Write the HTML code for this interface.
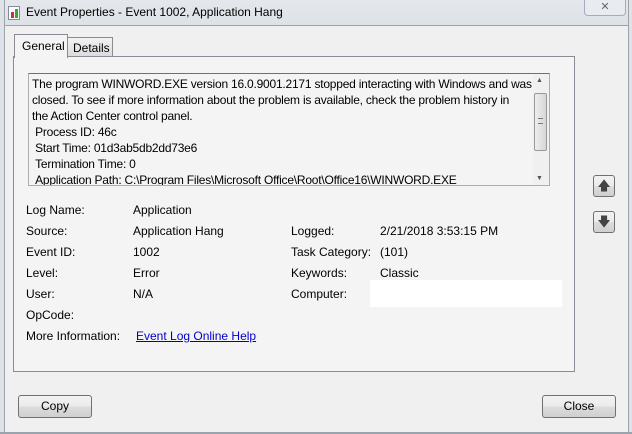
<!DOCTYPE html>
<html><head><style>
*{margin:0;padding:0;box-sizing:border-box}
body{width:632px;height:434px;background:#f0f0f0;font-family:"Liberation Sans",sans-serif;font-size:12px;color:#000;position:relative;overflow:hidden}
.a{position:absolute;white-space:nowrap}
.btn{position:absolute;border:1px solid #707070;border-radius:3px;background:linear-gradient(#f2f2f2,#ebebeb 50%,#dddddd 51%,#cfcfcf);text-align:center;line-height:21px}
</style></head><body>
<div class="a" style="left:0;top:0;width:632px;height:26px;background:linear-gradient(#e4e8ec,#dde2e7)"></div>
<div class="a" style="left:0;top:0;width:5px;height:434px;background:#dfe3e8;border-right:1px solid #9ba3ad"></div>
<div class="a" style="right:0;top:0;width:4px;height:434px;background:#dfe3e8;border-left:1px solid #9ba3ad"></div>
<div class="a" style="left:0;bottom:0;width:632px;height:2px;background:#9ba3ad"></div>
<div class="a" style="left:5px;top:25px;width:623px;height:1px;background:#9ba3ad"></div>
<div class="a" style="left:8px;top:6px;width:12px;height:14px;border:1px solid #889;background:#fff"><div style="position:absolute;left:2px;top:5px;width:3px;height:6px;background:#c33"></div><div style="position:absolute;left:6px;top:2px;width:3px;height:9px;background:#3a3"></div></div>
<div class="a" style="left:26px;top:5px;font-size:12px">Event Properties - Event 1002, Application Hang</div>
<div class="a" style="left:584px;top:0;width:42px;height:16px;border:1px solid #aab;border-top:none;border-radius:0 0 4px 4px;background:#e8ebef;text-align:center;font-size:11px;line-height:14px;color:#666">✕</div>
<div class="a" style="left:13px;top:56px;width:562px;height:316px;border:1px solid #898c95;background:#f4f4f4"></div>
<div class="a" style="left:14px;top:34px;width:54px;height:24px;border:1px solid #898c95;border-bottom:none;background:#f4f4f4;padding:4px 0 0 7px">General</div>
<div class="a" style="left:67px;top:37px;width:46px;height:20px;border:1px solid #898c95;background:linear-gradient(#f2f2f2,#dcdcdc);padding:3px 0 0 5px">Details</div>
<div class="a" style="left:28px;top:73px;width:522px;height:113px;border:1px solid #abadb3;border-top-color:#707070;background:#f4f4f4;overflow:hidden">
<div style="position:absolute;left:3px;top:2px;line-height:16px;white-space:nowrap;letter-spacing:-0.22px">The program WINWORD.EXE version 16.0.9001.2171 stopped interacting with Windows and was<br>closed. To see if more information about the problem is available, check the problem history in<br>the Action Center control panel.<br>&nbsp;Process ID: 46c<br>&nbsp;Start Time: 01d3ab5db2dd73e6<br>&nbsp;Termination Time: 0<br>&nbsp;Application Path: C:\Program Files\Microsoft Office\Root\Office16\WINWORD.EXE<br>&nbsp;Report Id: 00d5d200-173b-11e8-bb1d-3c6aa9e0c151</div>
<div style="position:absolute;right:0;top:0;width:16px;height:111px;background:#f0f0f0">
<div style="position:absolute;left:3px;top:3px;font-size:7px;color:#555">▲</div>
<div style="position:absolute;left:1px;top:19px;width:13px;height:58px;border:1px solid #999;border-radius:2px;background:linear-gradient(90deg,#eee,#d6d6d6)"><div style="position:absolute;left:3px;top:24px;width:5px;height:6px;border-top:1px solid #777;border-bottom:1px solid #777"></div></div>
<div style="position:absolute;left:3px;bottom:3px;font-size:7px;color:#555">▼</div>
</div></div>
<div class="a" style="left:26px;top:203px">Log Name:</div><div class="a" style="left:133px;top:203px">Application</div>
<div class="a" style="left:26px;top:224px">Source:</div><div class="a" style="left:133px;top:224px">Application Hang</div>
<div class="a" style="left:291px;top:224px">Logged:</div><div class="a" style="left:380px;top:224px">2/21/2018 3:53:15 PM</div>
<div class="a" style="left:26px;top:245px">Event ID:</div><div class="a" style="left:133px;top:245px">1002</div>
<div class="a" style="left:291px;top:245px">Task Category:</div><div class="a" style="left:380px;top:245px">(101)</div>
<div class="a" style="left:26px;top:266px">Level:</div><div class="a" style="left:133px;top:266px">Error</div>
<div class="a" style="left:291px;top:266px">Keywords:</div><div class="a" style="left:380px;top:266px">Classic</div>
<div class="a" style="left:26px;top:287px">User:</div><div class="a" style="left:133px;top:287px">N/A</div>
<div class="a" style="left:291px;top:287px">Computer:</div>
<div class="a" style="left:370px;top:280px;width:192px;height:27px;background:#fff"></div>
<div class="a" style="left:26px;top:308px">OpCode:</div>
<div class="a" style="left:26px;top:329px">More Information:</div><div class="a" style="left:136px;top:329px;color:#0000cc;text-decoration:underline">Event Log Online Help</div>
<div class="btn" style="left:593px;top:175px;width:22px;height:22px;line-height:20px;font-size:13px;color:#444">🡅</div>
<div class="btn" style="left:593px;top:211px;width:22px;height:22px;line-height:20px;font-size:13px;color:#444">🡇</div>
<div class="btn" style="left:18px;top:395px;width:74px;height:23px">Copy</div>
<div class="btn" style="left:542px;top:395px;width:74px;height:23px">Close</div>
</body></html>
